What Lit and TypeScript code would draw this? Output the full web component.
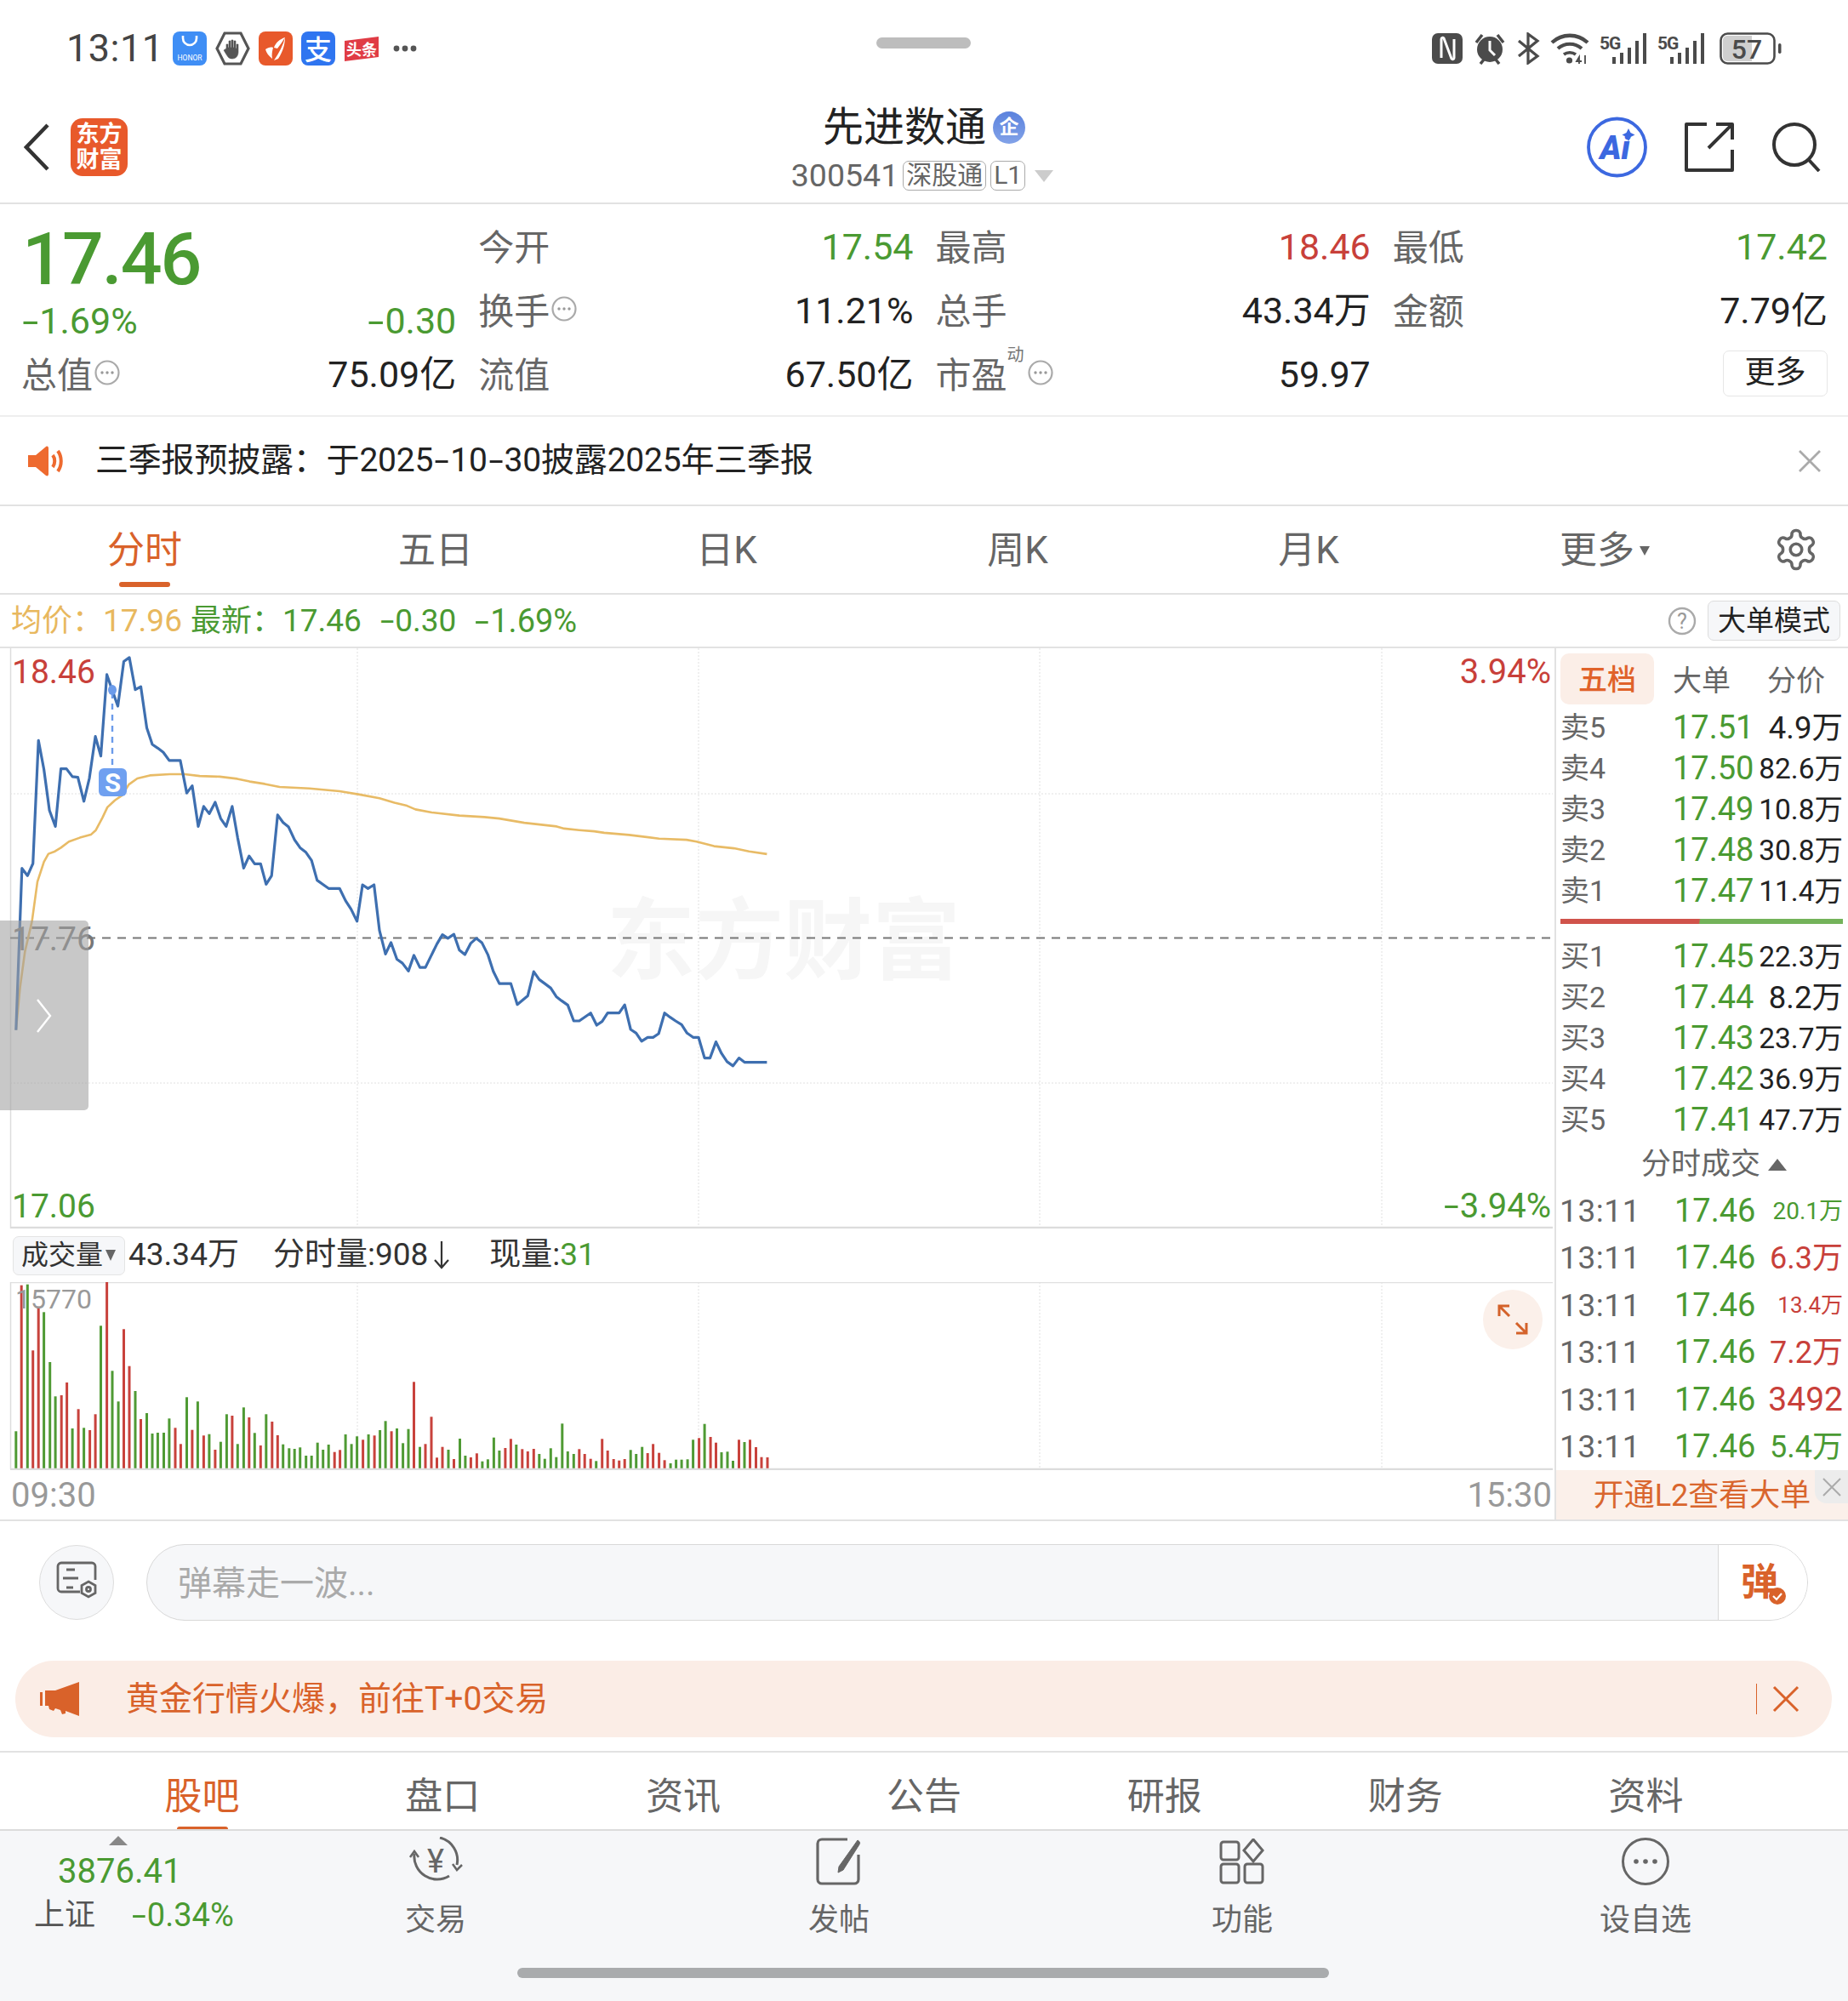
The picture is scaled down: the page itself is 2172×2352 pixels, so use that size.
import { LitElement, css, html, svg } from "lit";
import { customElement } from "lit/decorators.js";

// points read off the reference, in zoomed crop units (x / 1.704, y / 2.8 + 740)
const PRICE = [[32,1318],[44,786],[55,810],[66,770],[77,365],[88,460],[99,595],[111,648],[122,458],[133,458],[145,484],[156,486],[168,565],[179,490],[191,352],[202,416],[214,148],[225,200],[236,252],[248,105],[259,92],[271,198],[282,188],[294,323],[305,378],[316,390],[327,404],[339,431],[350,431],[361,431],[374,538],[385,514],[397,648],[408,582],[419,606],[431,568],[442,622],[453,648],[465,582],[476,685],[488,785],[499,745],[510,771],[522,771],[533,838],[544,810],[556,610],[567,635],[578,650],[590,692],[601,718],[612,732],[624,760],[635,825],[646,838],[658,852],[669,852],[680,852],[692,892],[703,920],[715,960],[726,840],[737,852],[749,840],[760,990],[772,1068],[783,1030],[795,1085],[806,1098],[818,1124],[829,1072],[841,1112],[852,1112],[863,1075],[875,1035],[886,1004],[897,1016],[909,1003],[920,1055],[931,1070],[943,1032],[954,1016],[965,1030],[977,1070],[988,1125],[1000,1165],[1011,1165],[1023,1165],[1036,1234],[1057,1205],[1069,1126],[1080,1152],[1091,1165],[1103,1180],[1114,1208],[1125,1222],[1137,1236],[1149,1288],[1160,1288],[1183,1262],[1195,1302],[1206,1290],[1217,1262],[1240,1262],[1251,1235],[1263,1316],[1274,1328],[1285,1355],[1297,1342],[1308,1342],[1319,1330],[1331,1262],[1342,1276],[1353,1288],[1365,1300],[1376,1328],[1388,1342],[1399,1342],[1411,1410],[1422,1410],[1434,1357],[1445,1395],[1456,1422],[1468,1436],[1480,1410],[1491,1424],[1536,1424]];
const AVG = [[32,1318],[40,1180],[50,1060],[64,960],[75,830],[88,765],[97,738],[110,730],[122,718],[138,698],[160,685],[182,675],[192,660],[205,620],[215,585],[230,562],[245,545],[258,510],[275,490],[300,480],[340,476],[370,476],[400,482],[440,484],[475,491],[500,500],[530,508],[560,518],[620,523],[680,532],[720,543],[760,555],[790,570],[815,580],[832,592],[865,602],[920,612],[970,617],[1000,622],[1050,636],[1115,648],[1130,655],[1160,660],[1190,664],[1210,669],[1260,676],[1320,688],[1375,692],[1395,698],[1430,713],[1470,720],[1500,730],[1536,739]];
// x:top colour, zoomed crop units (x / 1.704, y / 3 + 1440)
const VOL = "32:730G 43:215R 55:212G 66:445R 77:290R 88:310G 100:486G 111:607G 123:603R 134:558R 145:720G 157:652R 168:718G 180:726R 191:670R 202:358G 214:200R 225:517G 237:625G 248:370R 259:500R 271:588G 282:687R 294:666G 305:738G 316:735G 328:735G 339:685G 351:718R 362:775R 374:610G 385:725R 396:625G 408:745R 419:740G 431:795R 442:767G 454:670G 465:675R 476:775G 488:646G 499:681R 510:736G 522:780R 533:670G 545:696R 556:744R 567:776G 579:790G 590:792G 601:787G 613:816G 624:816G 636:770G 647:795G 658:777G 670:803R 681:796R 692:741G 704:775G 715:748G 727:760R 738:741G 750:745R 761:726G 772:694G 784:730R 795:720G 807:772G 818:722G 829:556R 841:785G 852:775R 864:679R 875:823R 886:785R 898:795G 909:828R 921:756G 932:816G 943:822R 955:808R 966:836G 977:829G 989:752G 1000:798G 1012:789R 1023:757R 1034:777G 1046:793R 1057:801R 1069:792R 1080:810G 1091:827G 1103:790G 1114:821G 1126:703G 1137:801G 1149:810G 1160:793R 1171:810R 1183:827R 1194:835G 1206:757R 1217:798R 1229:828R 1240:833R 1251:828R 1263:796G 1274:810G 1286:785G 1297:807R 1308:775R 1320:806R 1331:832R 1343:843G 1354:830G 1365:830G 1377:829G 1388:760G 1400:754R 1411:704G 1423:750R 1434:770R 1445:804G 1457:802G 1468:834G 1480:760R 1491:768G 1502:760R 1514:786R 1525:821R 1537:822R";

const toPath = (pts: number[][]) =>
  pts.map(([x, y]) => `${(x / 1.704).toFixed(1)},${(y / 2.8 - 22).toFixed(1)}`).join(" ");

const SELL = [["卖5","17.51","4.9万","w"],["卖4","17.50","82.6万"],["卖3","17.49","10.8万"],["卖2","17.48","30.8万"],["卖1","17.47","11.4万"]];
const BUY = [["买1","17.45","22.3万"],["买2","17.44","8.2万","w"],["买3","17.43","23.7万"],["买4","17.42","36.9万"],["买5","17.41","47.7万"]];
const TRADES = [["20.1万","g","sm"],["6.3万","r",""],["13.4万","r","xs"],["7.2万","r",""],["3492","r","lg"],["5.4万","g",""]];

// the phone font has a much wider minus sign than Roboto
const neg = (s: string) =>
  s.startsWith("-") ? html`<span class="hy">-</span>${s.slice(1)}` : s;

const dotsIcon = html`<svg class="dots" width="30" height="30" viewBox="0 0 30 30" fill="none"><circle cx="15" cy="15" r="13.5" stroke="#aaa" stroke-width="2.2"/><circle cx="9" cy="15" r="1.7" fill="#999"/><circle cx="15" cy="15" r="1.7" fill="#999"/><circle cx="21" cy="15" r="1.7" fill="#999"/></svg>`;

@customElement("app-root")
export class AppRoot extends LitElement {
  static styles = css`
    :host {
      display: block;
      width: 2172px;
      height: 2352px;
      background: #fff;
      overflow: hidden;
      position: relative;
      font-family: Roboto, "Noto Sans CJK SC", sans-serif;
      line-height: 1.2;
      color: #222;
    }
    .g { color: #4a9a32; }
    .r { color: #c8403a; }
    .o { color: #d9622a; }
    .hy { display: inline-block; transform: scaleX(1.6); padding: 0 0.11em; }

    .status { height: 114px; display: flex; align-items: center; padding: 0 78px; box-sizing: border-box; }
    .clock { font-size: 45px; color: #444; letter-spacing: 0.5px; width: 125px; }
    .st-left { display: flex; align-items: center; gap: 10px; }
    .st-right { margin-left: auto; display: flex; align-items: center; gap: 12px; }
    .handle { position: absolute; left: 1030px; top: 44px; width: 111px; height: 13px; border-radius: 7px; background: #bdbdbd; }

    .header { height: 126px; box-sizing: border-box; border-bottom: 2px solid #e2e2e2; display: grid; grid-template-columns: 1fr auto 1fr; align-items: center; }
    .hd-left { display: flex; align-items: center; gap: 25px; padding-left: 28px; margin-top: -6px; }
    .logo { width: 67px; height: 68px; border-radius: 14px; background: #e8592b; color: #fff; font-size: 27px; font-weight: 700; line-height: 30px; text-align: center; }
    .logo div { padding-top: 4px; }
    .hd-center { display: flex; flex-direction: column; align-items: center; margin-top: -10px; }
    .title { display: flex; align-items: center; font-size: 48px; height: 66px; box-sizing: border-box; padding-top: 2px; gap: 8px; color: #222; }
    .verified { width: 38px; height: 38px; border-radius: 50%; background: linear-gradient(#5b82dd, #82a2e8); color: #fff; font-size: 23px; font-weight: 700; display: flex; align-items: center; justify-content: center; }
    .code { display: flex; align-items: center; font-size: 37.5px; color: #666; height: 40px; margin: 5px 4px 0 0; }
    .tag { border: 1.5px solid #aaa; border-radius: 7px; font-size: 30px; height: 35px; line-height: 32px; padding: 0 3px; margin-left: 5px; box-sizing: border-box; color: #666; }
    .tag.first { margin-left: 5px; }
    .caret { margin-left: 11px; }
    .hd-right { display: flex; justify-content: flex-end; align-items: center; gap: 44px; padding-right: 30px; margin-top: -6px; }

    .quote { height: 250px; box-sizing: border-box; border-bottom: 2px solid #eee; padding: 13px 24px 0 25px; display: grid; grid-template-columns: repeat(4, 1fr); grid-auto-rows: 75px; column-gap: 26px; }
    .cell { display: flex; align-items: center; justify-content: space-between; font-size: 43px; }
    .lb { font-size: 42px; color: #666; display: flex; align-items: center; padding-top: 3px; }
    .dots { margin: -8px 0 0 2px; }
    .sup { font-size: 20px; color: #777; align-self: flex-start; margin: -12px 2px 0 0; }
    .price { grid-row: span 2; display: flex; flex-direction: column; }
    .big { font-size: 86px; font-weight: 500; line-height: 86px; margin: 9px 0 0 1px; letter-spacing: -2px; }
    .sub { display: flex; justify-content: space-between; align-items: center; font-size: 43px; height: 66px; margin-top: 4px; }
    .more-btn { font-size: 36px; width: 123px; height: 54px; border: 1.5px solid #e6e6e6; border-radius: 7px; box-sizing: border-box; display: flex; align-items: center; justify-content: center; margin-top: -4px; }

    .notice { height: 105px; box-sizing: border-box; border-bottom: 2px solid #e2e2e2; display: flex; align-items: center; padding: 0 31px 0 33px; font-size: 39px; color: #222; }
    .notice .txt { margin-left: 34px; padding-bottom: 1px; letter-spacing: -0.2px; }
    .notice .hy { padding: 0 0.12em; }
    .notice .x { margin-left: auto; }

    .tabs { height: 104px; box-sizing: border-box; border-bottom: 2px solid #e2e2e2; display: grid; grid-template-columns: repeat(6, 342px) 1fr; align-items: center; font-size: 44px; color: #666; text-align: center; margin-left: -1px; }
    .tab { position: relative; height: 100%; box-sizing: border-box; padding-top: 3px; display: flex; align-items: center; justify-content: center; }
    .tab.on { color: #d9622a; }
    .tab.on::after { content: ""; position: absolute; left: 141px; bottom: 7px; width: 60px; height: 6px; border-radius: 3px; background: #d9622a; }
    .tab.more { margin-left: 12px; }
    .tri { margin: 0 0 0 6px; }
    .gear { display: flex; justify-content: center; margin-left: -1px; }

    .info { height: 63px; box-sizing: border-box; border-bottom: 2px solid #e2e2e2; display: flex; align-items: center; padding: 0 9px 0 13px; font-size: 37px; }
    .info > span { margin-top: 2px; }
    .cn { font-size: 36px; }
    .y { color: #e8b85e; }
    .info .gp { margin-left: 10px; }
    .info .gp2 { margin-left: 21px; }
    .info .pct { font-size: 38px; }
    .info .end { margin-left: auto; display: flex; align-items: center; gap: 13px; }
    .big-mode { width: 156px; height: 47px; box-sizing: border-box; border: 1.5px solid #ddd; border-radius: 7px; background: #f6f7f9; font-size: 33px; display: flex; align-items: center; justify-content: center; color: #222; }

    .main { height: 1026px; box-sizing: border-box; border-bottom: 2px solid #e2e2e2; display: flex; }
    .left { width: 1827px; flex: none; display: flex; flex-direction: column; }
    .chart { position: relative; height: 682px; }
    .chart svg, .volume svg { display: block; }
    .lab { position: absolute; font-size: 39px; line-height: 44px; }
    .lab.pct { font-size: 40px; }
    .handle-l { position: absolute; left: 0; top: 320px; width: 104px; height: 223px; background: rgba(160, 160, 160, 0.58); border-radius: 0 5px 5px 0; display: flex; align-items: center; justify-content: center; }

    .volbar { height: 63px; box-sizing: border-box; display: flex; align-items: center; padding: 0 0 1px 15px; font-size: 37px; color: #333; }
    .volbtn { width: 132px; height: 46px; box-sizing: border-box; border: 1.5px solid #e4e4e4; border-radius: 7px; background: #f6f7f9; font-size: 32px; display: flex; align-items: center; padding-left: 9px; gap: 3px; margin: 1px 4px 0 0; }
    .volbar .s2 { margin-left: 40px; display: flex; align-items: center; }
    .volbar .s3 { margin-left: 46px; }
    .volume { position: relative; height: 221px; }
    .vol-max { position: absolute; left: 18px; top: 2px; font-size: 32px; line-height: 36px; color: #999; }
    .expand { position: absolute; left: 1743px; top: 9px; width: 70px; height: 70px; border-radius: 50%; background: #fbf0ea; display: flex; align-items: center; justify-content: center; }
    .axis { flex: 1; display: flex; justify-content: space-between; align-items: center; padding: 2px 3px 0 13px; font-size: 40px; color: #999; }

    .side { flex: 1; border-left: 2px solid #e2e2e2; display: flex; flex-direction: column; }
    .side-tabs { height: 68px; box-sizing: border-box; padding-top: 6px; padding-left: 5px; display: flex; font-size: 34px; color: #666; }
    .side-tabs > div { display: flex; align-items: center; justify-content: center; box-sizing: border-box; padding-top: 2px; }
    .st-on { width: 110px; height: 60px; background: #fbeee7; border-radius: 10px; color: #e0622a; font-weight: 500; }
    .st-a { width: 112px; }
    .st-b { width: 110px; }
    .row { height: 48px; box-sizing: border-box; display: grid; grid-template-columns: 132px 1fr auto; align-items: center; padding: 3px 6px 0 5px; font-size: 38px; }
    .row .k { font-size: 34px; color: #666; }
    .row .v { font-size: 33.5px; color: #222; }
    .row .v.w { font-size: 36.5px; }
    .ratio { height: 6px; margin: 10px 6px 13px 5px; background: linear-gradient(100deg, #d0534b 49%, #74b35a 49.5%); }
    .deal { height: 56px; box-sizing: border-box; padding-top: 3px; display: flex; align-items: center; justify-content: center; gap: 9px; font-size: 35px; color: #666; margin-left: 28px; }
    .trade { height: 55.5px; box-sizing: border-box; display: grid; grid-template-columns: 135px 1fr auto; align-items: center; padding: 2px 6px 0 4px; font-size: 38px; }
    .trade .t { color: #666; font-size: 37px; letter-spacing: 0.6px; }
    .trade .n { font-size: 36px; }
    .trade .sm { font-size: 28px; }
    .trade .xs { font-size: 26px; }
    .trade .lg { font-size: 39px; }
    .l2 { flex: 1; box-sizing: border-box; padding-top: 4px; background: #fbf0ea; color: #d9662e; font-size: 36px; display: flex; align-items: center; justify-content: center; position: relative; }
    .l2 .close { position: absolute; right: 0; top: 0; width: 39px; height: 39px; background: #ececec; border-bottom-left-radius: 14px; display: flex; align-items: center; justify-content: center; }

    .danmu { height: 164px; display: flex; align-items: center; padding: 0 47px 0 46px; gap: 38px; }
    .circ { width: 88px; height: 88px; box-sizing: border-box; border-radius: 50%; border: 1.5px solid #ddd; background: #f6f7f9; display: flex; align-items: center; justify-content: center; flex: none; margin-top: -20px; }
    .input { flex: 1; height: 90px; margin-top: -20px; box-sizing: border-box; border: 1.5px solid #d8d8d8; border-radius: 45px; background: #f6f7f9; display: flex; align-items: center; overflow: hidden; font-size: 40px; color: #aaa; }
    .input .ph { flex: 1; padding: 3px 0 0 36px; }
    .send { width: 105px; height: 100%; background: #fff; border-left: 1.5px solid #d8d8d8; position: relative; display: flex; align-items: center; color: #d9622a; font-size: 44px; font-weight: 700; padding-left: 26px; box-sizing: border-box; }
    .send svg { position: absolute; left: 58px; top: 49px; }

    .banner { height: 90px; margin: 0 19px 0 18px; border-radius: 45px; background: #fbede6; display: flex; align-items: center; padding: 0 38px 0 29px; color: #d9622a; font-size: 39px; }
    .banner .txt { margin-left: 55px; }
    .banner .bar { margin-left: auto; width: 1.5px; height: 36px; background: #d9622a; }
    .banner .x { margin-left: 18px; }

    .subtabs { margin-top: 16px; height: 92px; box-sizing: border-box; border-top: 2px solid #e2e2e2; padding: 0 96px; display: grid; grid-template-columns: repeat(7, 1fr); font-size: 44px; color: #666; }
    .subtabs div { display: flex; align-items: center; justify-content: center; position: relative; padding-top: 14px; }
    .subtabs .on { color: #d9622a; }
    .subtabs .on::after { content: ""; position: absolute; left: 112px; bottom: 0; width: 60px; height: 3px; background: #d9622a; border-radius: 3px 3px 0 0; }

    .foot { height: 202px; box-sizing: border-box; border-top: 2px solid #dcdcdc; background: #f6f7f9; display: grid; grid-template-columns: 275px repeat(4, 1fr); padding-right: 1px; position: relative; }
    .idx { position: relative; }
    .idx svg { position: absolute; left: 128px; top: 6px; }
    .idx .n { position: absolute; left: 68px; top: 25px; font-size: 40px; line-height: 46px; }
    .idx .nm { position: absolute; left: 40px; top: 77px; font-size: 36px; line-height: 44px; color: #555; }
    .idx .pc { position: absolute; left: 154px; top: 77px; font-size: 38px; line-height: 44px; }
    .act { display: flex; flex-direction: column; align-items: center; font-size: 36px; color: #666; padding-top: 7px; }
    .ic { height: 58px; display: flex; align-items: center; }
    .act span { margin-top: 17px; line-height: 46px; }
    .act svg { display: block; }
    .home { position: absolute; left: 608px; top: 161px; width: 954px; height: 12px; border-radius: 6px; background: #a9abad; }
  `;

  private renderStatus() {
    return html`<div class="status">
      <div class="clock">13:11</div>
      <div class="st-left">
        <svg width="40" height="40" viewBox="0 0 40 40"><rect width="40" height="40" rx="8" fill="#3f8ef5"/><path d="M12 5v3a8 8 0 0 0 16 0V5" fill="none" stroke="#fff" stroke-width="2.6"/><text x="20" y="34" font-size="8.5" text-anchor="middle" fill="#fff">HONOR</text></svg>
        <svg width="41" height="40" viewBox="0 0 41 40"><path d="M11 2h19l9 18-9 18H11L2 20z" fill="#fff" stroke="#555" stroke-width="3.2"/><path d="M13 20v-5h2v4h1v-8h2v8h1v-9h2v9h1v-8h2v9h1v-5h2v9c0 5-3 8-7 8s-5-2-7-5l-3-5z" fill="#555" stroke="#555" stroke-width="0.6"/></svg>
        <svg width="40" height="40" viewBox="0 0 40 40"><rect width="40" height="40" rx="8" fill="#e8592b"/><path d="M31 7c-6 2-11 6-13 12l4 1c3-4 6-8 9-13zM31 7c0 7-2 16-8 25l-5 2c6-9 11-18 13-27zM8 21c3-2 6-3 9-2-1 4-2 8-1 13-4-3-7-7-8-11z" fill="#fff"/></svg>
        <svg width="40" height="40" viewBox="0 0 40 40"><rect width="40" height="40" rx="8" fill="#2f75f0"/><text x="20" y="33" font-size="32" text-anchor="middle" fill="#fff" font-weight="500">支</text></svg>
        <svg width="42" height="40" viewBox="0 0 42 40"><path d="M1 11 41 6v24L1 35z" fill="#e03c45"/><text x="21" y="28" font-size="18" font-weight="700" text-anchor="middle" fill="#fff">头条</text></svg>
        <svg width="30" height="10" viewBox="0 0 30 10" style="margin-left:5px"><circle cx="5" cy="5" r="3.4" fill="#555"/><circle cx="15" cy="5" r="3.4" fill="#555"/><circle cx="25" cy="5" r="3.4" fill="#555"/></svg>
      </div>
      <div class="st-right">
        <svg width="38" height="38" viewBox="0 0 38 38"><rect x="1" y="1" width="36" height="36" rx="7" fill="#4b4b4b"/><path d="M12 30V8c0-2 2-2 3-1l9 24c1 1 3 1 3-1V8" fill="none" stroke="#fff" stroke-width="3"/></svg>
        <svg width="38" height="38" viewBox="0 0 38 38"><path d="M3 12 10 3M35 12 28 3" stroke="#4b4b4b" stroke-width="3.5"/><path d="M8 37l4-5M30 37l-4-5" stroke="#4b4b4b" stroke-width="3.5"/><circle cx="19" cy="20" r="15" fill="#4b4b4b"/><path d="M19 10v11l6 6" fill="none" stroke="#fff" stroke-width="3"/></svg>
        <svg width="28" height="38" viewBox="0 0 28 38"><path d="M3 10 25 28 14 36V2l11 8L3 28" fill="none" stroke="#4b4b4b" stroke-width="3.2"/></svg>
        <svg width="46" height="38" viewBox="0 0 46 38" fill="none" stroke="#4b4b4b"><path d="M2 12c12-11 30-11 42 0" stroke-width="4.4"/><path d="M9 19c8-7 20-7 28 0" stroke-width="4.2"/><path d="M16 26c4-3 10-3 14 0" stroke-width="3.6"/><circle cx="22.5" cy="33" r="3.6" fill="#4b4b4b" stroke="none"/><path d="M34 37v-8l-3 5h6M41 37v-10" stroke-width="1.8"/></svg>
        ${this.signal()}
        ${this.signal()}
        <svg width="73" height="38" viewBox="0 0 73 38" style="margin-left:5px"><rect x="1.5" y="1.5" width="63" height="35" rx="8" fill="#fff" stroke="#4b4b4b" stroke-width="2.6"/><path d="M4 9a5 5 0 0 1 5-5h29v30H9a5 5 0 0 1-5-5z" fill="#cfcfcf"/><rect x="69" y="13" width="3.5" height="12" rx="1.7" fill="#4b4b4b"/><text x="32" y="31" font-size="32" font-weight="500" text-anchor="middle" fill="#4b4b4b">57</text></svg>
      </div>
    </div>`;
  }

  private signal() {
    return html`<svg width="56" height="38" viewBox="0 0 56 38" fill="#4b4b4b"><text x="0" y="20" font-size="21" font-weight="700" letter-spacing="-1">5G</text><rect x="15" y="29" width="4" height="8"/><rect x="24" y="24" width="4" height="13"/><rect x="33" y="18" width="4" height="19"/><rect x="42" y="10" width="4" height="27"/><rect x="51" y="1" width="4" height="36"/></svg>`;
  }

  private renderHeader() {
    return html`<div class="header">
      <div class="hd-left">
        <svg width="30" height="56" viewBox="0 0 30 56" fill="none"><path d="M28 2 3 28l25 26" stroke="#333" stroke-width="4.5"/></svg>
        <div class="logo"><div>东方<br />财富</div></div>
      </div>
      <div class="hd-center">
        <div class="title">先进数通<span class="verified">企</span></div>
        <div class="code">300541<span class="tag first">深股通</span><span class="tag">L1</span>
          <svg class="caret" width="22" height="14" viewBox="0 0 22 14"><path d="M0 0h22L11 14z" fill="#ccc"/></svg>
        </div>
      </div>
      <div class="hd-right">
        <svg width="71" height="72" viewBox="0 0 71 72"><circle cx="35.5" cy="36" r="33.5" fill="#fff" stroke="#3c68e0" stroke-width="3.8"/><text x="33" y="50" font-size="38" font-weight="900" font-style="italic" text-anchor="middle" fill="#3c68e0">Ai</text><path d="M49 14l2.5 5 5 2.5-5 2.5-2.5 5-2.5-5-5-2.5 5-2.5z" fill="#3c68e0"/></svg>
        <svg width="58" height="58" viewBox="0 0 58 58" fill="none" stroke="#333" stroke-width="4"><path d="M26 2H2v54h54V32M28 30 56 2M37 2h19v18" stroke-linejoin="round"/></svg>
        <svg width="60" height="58" viewBox="0 0 60 58" fill="none" stroke="#333" stroke-width="4"><circle cx="27" cy="26" r="24"/><path d="m44 44 12 13"/></svg>
      </div>
    </div>`;
  }

  private renderQuote() {
    return html`<div class="quote">
      <div class="price g">
        <div class="big">17.46</div>
        <div class="sub"><span>${neg("-1.69%")}</span><span>${neg("-0.30")}</span></div>
      </div>
      <div class="cell"><span class="lb">今开</span><span class="g">17.54</span></div>
      <div class="cell"><span class="lb">最高</span><span class="r">18.46</span></div>
      <div class="cell"><span class="lb">最低</span><span class="g">17.42</span></div>
      <div class="cell"><span class="lb">换手${dotsIcon}</span><span>11.21%</span></div>
      <div class="cell"><span class="lb">总手</span><span>43.34万</span></div>
      <div class="cell"><span class="lb">金额</span><span>7.79亿</span></div>
      <div class="cell"><span class="lb">总值${dotsIcon}</span><span>75.09亿</span></div>
      <div class="cell"><span class="lb">流值</span><span>67.50亿</span></div>
      <div class="cell"><span class="lb">市盈<span class="sup">动</span>${dotsIcon}</span><span>59.97</span></div>
      <div class="cell"><span></span><span class="more-btn">更多</span></div>
    </div>`;
  }

  private renderNotice() {
    return html`<div class="notice">
      <svg width="45" height="36" viewBox="0 0 45 36"><path d="M0 11h9L21 1c2-1 3 0 3 2v30c0 2-1 3-3 2L9 25H0z" fill="#ee6a2f"/><path d="M29 11c3 4 3 10 0 14M35 6c5 7 5 17 0 24" fill="none" stroke="#ee6a2f" stroke-width="4"/></svg>
      <span class="txt">三季报预披露：于2025<span class="hy">-</span>10<span class="hy">-</span>30披露2025年三季报</span>
      <svg class="x" width="28" height="28" viewBox="0 0 28 28"><path d="M2 2l24 24M26 2 2 26" stroke="#aaa" stroke-width="2.8"/></svg>
    </div>`;
  }

  private renderTabs() {
    return html`<div class="tabs">
      <div class="tab on">分时</div>
      <div class="tab">五日</div>
      <div class="tab">日K</div>
      <div class="tab">周K</div>
      <div class="tab">月K</div>
      <div class="tab more">更多<svg class="tri" width="12" height="11" viewBox="0 0 12 11"><path d="M0 0h12L6 11z" fill="#666"/></svg></div>
      <div class="gear">
        <svg width="54" height="54" viewBox="0 0 24 24" fill="none" stroke="#666" stroke-width="1.6"><path d="M12.22 2h-.44a2 2 0 0 0-2 2v.18a2 2 0 0 1-1 1.73l-.43.25a2 2 0 0 1-2 0l-.15-.08a2 2 0 0 0-2.73.73l-.22.38a2 2 0 0 0 .73 2.73l.15.1a2 2 0 0 1 1 1.72v.51a2 2 0 0 1-1 1.74l-.15.09a2 2 0 0 0-.73 2.73l.22.38a2 2 0 0 0 2.73.73l.15-.08a2 2 0 0 1 2 0l.43.25a2 2 0 0 1 1 1.73V20a2 2 0 0 0 2 2h.44a2 2 0 0 0 2-2v-.18a2 2 0 0 1 1-1.73l.43-.25a2 2 0 0 1 2 0l.15.08a2 2 0 0 0 2.73-.73l.22-.39a2 2 0 0 0-.73-2.73l-.15-.08a2 2 0 0 1-1-1.74v-.5a2 2 0 0 1 1-1.74l.15-.09a2 2 0 0 0 .73-2.73l-.22-.38a2 2 0 0 0-2.73-.73l-.15.08a2 2 0 0 1-2 0l-.43-.25a2 2 0 0 1-1-1.73V4a2 2 0 0 0-2-2z"/><circle cx="12" cy="12" r="3"/></svg>
      </div>
    </div>`;
  }

  private renderInfo() {
    return html`<div class="info">
      <span class="y"><span class="cn">均价：</span>17.96</span>
      <span class="g gp"><span class="cn">最新：</span>17.46</span>
      <span class="g gp2">${neg("-0.30")}</span>
      <span class="g gp2 pct">${neg("-1.69%")}</span>
      <div class="end">
        <svg width="34" height="34" viewBox="0 0 34 34"><circle cx="17" cy="17" r="15" fill="none" stroke="#aaa" stroke-width="2.4"/><text x="17" y="26" font-size="25" text-anchor="middle" fill="#999">?</text></svg>
        <div class="big-mode">大单模式</div>
      </div>
    </div>`;
  }

  private renderChart() {
    const vs = [420, 821, 1222, 1624];
    return html`<div class="chart">
      <svg width="1827" height="682" viewBox="0 0 1827 682" fill="none">
        <text x="921" y="381" font-size="104" font-weight="700" text-anchor="middle" fill="#f6f6f6" stroke="none">东方财富</text>
        <path d="M12.5 0V682" stroke="#ddd" stroke-width="1.5"/>
        ${vs.map((x) => svg`<path d="M${x} 0V680" stroke="#e0e0e0" stroke-dasharray="2 2"/>`)}
        <path d="M12 171H1825M12 511H1825" stroke="#e0e0e0" stroke-dasharray="2 2"/>
        <path d="M12 340.5H1825" stroke="#777" stroke-width="1.8" stroke-dasharray="10 8"/>
        <path d="M12 681H1825" stroke="#dcdcdc" stroke-width="2.4"/>
        <polyline points="${toPath(AVG)}" stroke="#e8bb66" stroke-width="2.6" stroke-linejoin="round"/>
        <polyline points="${toPath(PRICE)}" stroke="#3e6fb0" stroke-width="3.2" stroke-linejoin="round"/>
        <path d="M132 52V142" stroke="#6b9bea" stroke-width="2.4" stroke-dasharray="7 6"/>
        <ellipse cx="132" cy="49" rx="5" ry="6" fill="#6b9bea"/>
        <rect x="116" y="141" width="33" height="33" rx="6" fill="#6fa0f0"/>
        <text x="132.5" y="169" font-size="31" font-weight="700" text-anchor="middle" fill="#fff">S</text>
      </svg>
      <span class="lab r" style="left:14px;top:6px">18.46</span>
      <span class="lab" style="left:14px;top:320px;color:#777">17.76</span>
      <span class="lab g" style="left:14px;top:634px">17.06</span>
      <span class="lab pct r" style="right:4px;top:6px">3.94%</span>
      <span class="lab pct g" style="right:4px;top:634px">${neg("-3.94%")}</span>
      <div class="handle-l">
        <svg width="20" height="40" viewBox="0 0 20 40"><path d="M2 1 17 20 2 39" fill="none" stroke="#fff" stroke-width="2.4"/></svg>
      </div>
    </div>`;
  }

  private renderVolume() {
    const bars = VOL.split(" ").map((b) => {
      const [x, rest] = b.split(":");
      return { x: +x / 1.704 - 1.5, top: parseInt(rest) / 3 - 68, up: rest.endsWith("R") };
    });
    return html`<div class="volbar">
        <div class="volbtn">成交量<svg width="12" height="13" viewBox="0 0 12 13"><path d="M0 0h12L6 13z" fill="#666"/></svg></div>
        <span>43.34万</span>
        <span class="s2">分时量:908<svg width="20" height="34" viewBox="0 0 20 34" style="margin-left:6px"><path d="M10 1v31M2 23l8 9 8-9" fill="none" stroke="#333" stroke-width="2.2"/></svg></span>
        <span class="s3">现量:<span class="g">31</span></span>
      </div>
      <div class="volume">
        <svg width="1827" height="221" viewBox="0 0 1827 221" fill="none">
          <path d="M12 .5H1825" stroke="#e0e0e0" stroke-width="1.5"/>
          <path d="M12.5 0V220" stroke="#ddd" stroke-width="1.5"/>
          ${[420, 821, 1222, 1624].map((x) => svg`<path d="M${x} 0V219" stroke="#e0e0e0" stroke-dasharray="2 2"/>`)}
          ${bars.map((b) => svg`<rect x="${b.x.toFixed(1)}" y="${b.top.toFixed(1)}" width="3" height="${(219 - b.top).toFixed(1)}" fill="${b.up ? "#c8423c" : "#4f9a34"}"/>`)}
          <path d="M12 220H1825" stroke="#dcdcdc" stroke-width="2.4"/>
        </svg>
        <span class="vol-max">15770</span>
        <div class="expand">
          <svg width="36" height="36" viewBox="0 0 36 36" fill="none" stroke="#d4622a" stroke-width="3"><path d="M2 14V2h12M2 2l12 12M34 22v12H22M34 34 22 22"/></svg>
        </div>
      </div>
      <div class="axis"><span>09:30</span><span>15:30</span></div>`;
  }

  private renderSide() {
    const row = (r: any[]) => html`<div class="row"><span class="k">${r[0]}</span><span class="g">${r[1]}</span><span class="v ${r[3] ?? ""}">${r[2]}</span></div>`;
    return html`<div class="side">
      <div class="side-tabs"><div class="st-on">五档</div><div class="st-a">大单</div><div class="st-b">分价</div></div>
      ${SELL.map(row)}
      <div class="ratio"></div>
      ${BUY.map(row)}
      <div class="deal">分时成交<svg width="22" height="14" viewBox="0 0 22 14"><path d="M11 0l11 14H0z" fill="#666"/></svg></div>
      ${TRADES.map((t) => html`<div class="trade"><span class="t">13:11</span><span class="g">17.46</span><span class="${t[1]} ${t[2] || "n"}">${t[0]}</span></div>`)}
      <div class="l2">开通L2查看大单
        <div class="close"><svg width="22" height="22" viewBox="0 0 22 22"><path d="M1 1l20 20M21 1 1 21" stroke="#aaa" stroke-width="2"/></svg></div>
      </div>
    </div>`;
  }

  private renderDanmu() {
    return html`<div class="danmu">
      <div class="circ">
        <svg width="52" height="50" viewBox="0 0 52 50" fill="none" stroke="#666" stroke-width="2.8"><path d="M30 36H8a4 4 0 0 1-4-4V6a4 4 0 0 1 4-4h36a4 4 0 0 1 4 4v16"/><path d="M14 10h10M10 20h18M14 31h8" /><path d="M40 24l8 4.5v9L40 42l-8-4.5v-9z"/><circle cx="40" cy="33" r="2.5"/></svg>
      </div>
      <div class="input">
        <span class="ph">弹幕走一波...</span>
        <div class="send">弹
          <svg width="22" height="22" viewBox="0 0 22 22"><circle cx="11" cy="11" r="10" fill="#d9622a"/><path d="M6 11l4 4 6-7" fill="none" stroke="#fff" stroke-width="2.2"/></svg>
        </div>
      </div>
    </div>`;
  }

  private renderBanner() {
    return html`<div class="banner">
      <svg width="46" height="40" viewBox="0 0 46 40"><path d="M0 12h3v16H0z" fill="#d9622a"/><path d="M6 10h12L46 0v40L30 34v3l-4 1-2-5-6-2-2 3-5-2-1-4H6z" fill="#d9622a"/></svg>
      <span class="txt">黄金行情火爆，前往T+0交易</span>
      <span class="bar"></span>
      <svg class="x" width="32" height="32" viewBox="0 0 32 32"><path d="M2 2l28 28M30 2 2 30" stroke="#d9622a" stroke-width="3"/></svg>
    </div>`;
  }

  private renderSubTabs() {
    return html`<div class="subtabs">
      <div class="on">股吧</div><div>盘口</div><div>资讯</div><div>公告</div><div>研报</div><div>财务</div><div>资料</div>
    </div>`;
  }

  private renderFoot() {
    return html`<div class="foot">
      <div class="idx">
        <svg width="22" height="11" viewBox="0 0 22 11"><path d="M11 0l11 11H0z" fill="#888"/></svg>
        <span class="n g">3876.41</span>
        <span class="nm">上证</span>
        <span class="pc g">${neg("-0.34%")}</span>
      </div>
      <div class="act">
        <div class="ic"><svg width="66" height="58" viewBox="0 0 66 58" fill="none" stroke="#666" stroke-width="3"><path d="M38 1a27 27 0 0 1 20 32M49 46A27 27 0 0 1 8 20"/><path d="M3 24l5-7 5 7M53 32l5 7 6-6" stroke-width="2.5"/><text x="33" y="42" font-size="38" text-anchor="middle" fill="#666" stroke="none">¥</text></svg></div>
        <span>交易</span>
      </div>
      <div class="act">
        <div class="ic"><svg width="56" height="56" viewBox="0 0 56 56" fill="none" stroke="#666" stroke-width="3.2"><path d="M38 2H8a5 5 0 0 0-5 5v42a5 5 0 0 0 5 5h38a5 5 0 0 0 5-5V20"/><path d="M50 3c3 2 3 3 2 5L33 38l-6 3 1-7z" fill="#666" stroke-width="1"/></svg></div>
        <span>发帖</span>
      </div>
      <div class="act">
        <div class="ic"><svg width="54" height="54" viewBox="0 0 54 54" fill="none" stroke="#666" stroke-width="3"><rect x="2" y="4" width="21" height="21" rx="3"/><path d="M40 1l11 13-11 13-11-13z"/><rect x="2" y="30" width="21" height="22" rx="3"/><rect x="30" y="30" width="21" height="22" rx="3"/></svg></div>
        <span>功能</span>
      </div>
      <div class="act">
        <div class="ic"><svg width="56" height="56" viewBox="0 0 56 56" fill="none"><circle cx="28" cy="28" r="26.5" stroke="#666" stroke-width="3"/><circle cx="17" cy="28" r="2.8" fill="#666"/><circle cx="28" cy="28" r="2.8" fill="#666"/><circle cx="39" cy="28" r="2.8" fill="#666"/></svg></div>
        <span>设自选</span>
      </div>
      <div class="home"></div>
    </div>`;
  }

  render() {
    return html`
      ${this.renderStatus()}
      <div class="handle"></div>
      ${this.renderHeader()}
      ${this.renderQuote()}
      ${this.renderNotice()}
      ${this.renderTabs()}
      ${this.renderInfo()}
      <div class="main">
        <div class="left">
          ${this.renderChart()}
          ${this.renderVolume()}
        </div>
        ${this.renderSide()}
      </div>
      ${this.renderDanmu()}
      ${this.renderBanner()}
      ${this.renderSubTabs()}
      ${this.renderFoot()}
    `;
  }
}
